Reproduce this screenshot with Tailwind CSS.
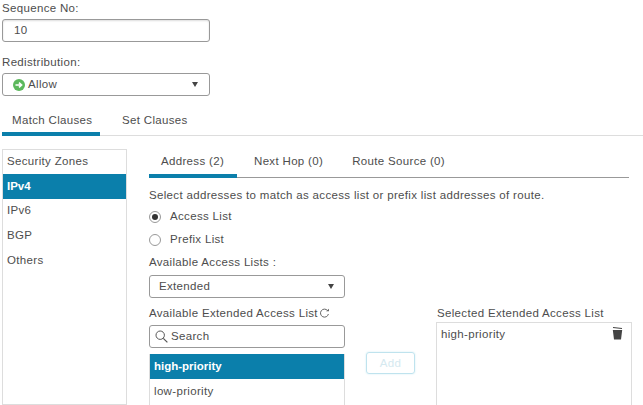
<!DOCTYPE html>
<html lang="en">
<head>
  <meta charset="UTF-8" />
  <title>Match Clauses</title>
  <script src="https://cdn.jsdelivr.net/npm/@tailwindcss/browser@4"></script>
</head>
<body class="bg-white text-[#4d4d4d] h-[405px] w-[643px] overflow-hidden font-['Liberation_Sans',sans-serif] text-[11.5px] tracking-[0.33px]">

  <div class="pl-[2px] pt-[2px]">
    <div class="h-[13px] leading-[13px]">Sequence No:</div>
    <div class="mt-[4px] w-[208px] h-[23px] border border-[#999] rounded-[3px] pl-[11px] leading-[21px] shadow-[inset_0_1px_2px_#ddd]">10</div>
    <div class="mt-[14px] h-[13px] leading-[13px]">Redistribution:</div>
    <div class="mt-[4px] w-[208px] h-[23px] border border-[#999] rounded-[3px] pl-[10px] pr-[11px] flex items-center justify-between">
      <span class="flex items-center gap-[3px]">
        <svg width="12" height="12" viewBox="0 0 12 12"><circle cx="6" cy="6" r="6" fill="#5cb85c"/><path d="M2.5 6H8M6 3.6 8.6 6 6 8.4" fill="none" stroke="#fff" stroke-width="1.6"/></svg>
        Allow
      </span>
      <span class="w-0 h-0 border-x-[3.5px] border-x-transparent border-t-[5px] border-t-[#444]"></span>
    </div>
  </div>

  <!-- top tabs -->
  <div class="mt-[16px] ml-[2px] flex h-[24px] border-b border-[#ddd]">
    <div class="w-[98px] pl-[10px] h-[24px] border-b-[4px] border-[#0b7fab]">Match Clauses</div>
    <div class="pl-[22px]">Set Clauses</div>
  </div>

  <div class="flex mt-[13px] ml-[2px]">
    <!-- left list -->
    <div class="w-[125px] h-[256px] border border-[#ddd] shrink-0">
      <div class="h-[24px] pl-[4px] leading-[23px]">Security Zones</div>
      <div class="h-[25px] pl-[4px] leading-[25px] bg-[#0b7fab] text-white font-bold tracking-normal">IPv4</div>
      <div class="h-[25px] pl-[4px] leading-[23px]">IPv6</div>
      <div class="h-[25px] pl-[4px] leading-[22px]">BGP</div>
      <div class="h-[25px] pl-[4px] leading-[23px]">Others</div>
    </div>

    <div class="ml-[22px] w-[480px] -mt-[1px]">
      <div class="flex h-[30px] border-b border-[#999] w-[480px]">
        <div class="w-[88px] h-[30px] pl-[12px] pt-[5px] border-b-[4px] border-[#0b7fab]">Address (2)</div>
        <div class="pl-[17px] pt-[5px]">Next Hop (0)</div>
        <div class="pl-[29px] pt-[5px]">Route Source (0)</div>
      </div>
      <div class="mt-[11px] h-[13px] leading-[13px]">Select addresses to match as access list or prefix list addresses of route.</div>

      <div class="mt-[3px] h-[23px] flex items-center gap-[9px]">
        <span class="w-[12px] h-[12px] rounded-full border border-[#999] flex items-center justify-center"><span class="w-[6px] h-[6px] rounded-full bg-[#333]"></span></span>
        Access List
      </div>
      <div class="h-[23px] flex items-center gap-[9px]">
        <span class="w-[12px] h-[12px] rounded-full border border-[#999]"></span>
        Prefix List
      </div>
      <div class="mt-[5px] h-[13px] leading-[13px]">Available Access Lists :</div>

      <div class="mt-[6px] w-[196px] h-[23px] border border-[#999] rounded-[3px] pl-[9px] pr-[10px] flex items-center justify-between">
        Extended
        <span class="w-0 h-0 border-x-[3.5px] border-x-transparent border-t-[5px] border-t-[#444]"></span>
      </div>

      <div class="flex">
        <div class="w-[196px] shrink-0">
          <div class="mt-[9px] h-[13px] leading-[13px] flex items-center">Available Extended Access List
            <svg class="ml-[1px]" width="11" height="11" viewBox="0 0 11 11"><path d="M8.6 2.6A4 4 0 1 0 9.4 6" fill="none" stroke="#666"/><path d="M7 3.2h3V.8z" fill="#666"/></svg>
          </div>
          <div class="mt-[5px] h-[23px] border border-[#999] rounded-[3px] pl-[5px] flex items-center gap-[3px]">
            <svg width="13" height="13" viewBox="0 0 13 13"><circle cx="5.2" cy="5.2" r="4.2" fill="none" stroke="#555"/><path d="M8.3 8.3 12.4 12.4" stroke="#555" stroke-width="1.2"/></svg>
            Search
          </div>
          <div class="mt-[6px] h-[60px] border-x border-[#ddd]">
            <div class="h-[25px] pl-[4px] leading-[25px] bg-[#0b7fab] text-white font-bold tracking-normal">high-priority</div>
            <div class="h-[25px] pl-[4px] leading-[25px]">low-priority</div>
          </div>
        </div>

        <div class="w-[21px] shrink-0"></div>
        <div class="w-[49px] h-[22px] mt-[54px] shrink-0 border border-[#bfe3ee] rounded-[3px] shadow-[0_0_2px_#cfeaf3] text-center leading-[20px] text-[#d5e9f0]">Add</div>
        <div class="w-[21px] shrink-0"></div>

        <div class="w-[196px] shrink-0">
          <div class="mt-[9px] h-[13px] leading-[13px] pl-[1px]">Selected Extended Access List</div>
          <div class="mt-[2px] h-[90px] border border-[#ddd] pl-[4px] pr-[8px] pt-[3px] flex justify-between">
            <span>high-priority</span>
            <svg width="11" height="14" viewBox="0 0 11 14"><path d="M1 1.5 10 2.5" stroke="#444" stroke-width="1.2"/><path d="M.8 4h9.4L9 13.5H2z" fill="#444"/></svg>
          </div>
        </div>
      </div>
    </div>
  </div>
</body>
</html>
